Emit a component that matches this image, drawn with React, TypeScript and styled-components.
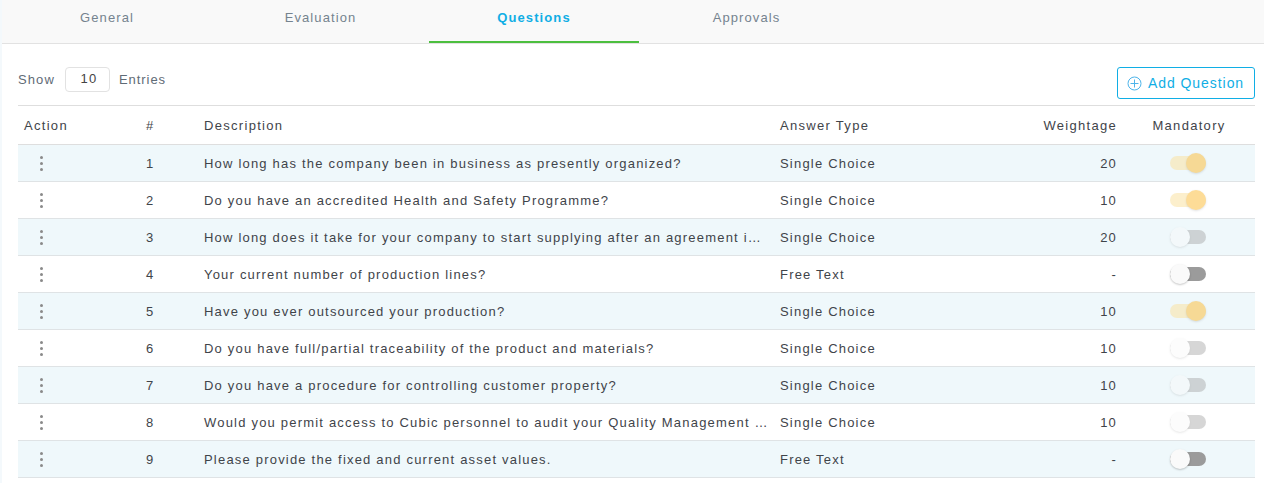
import React from "react";
import styled, { createGlobalStyle } from "styled-components";

const Global = createGlobalStyle`
  html, body { margin: 0; padding: 0; background: #f4f9fc; }
  body { font-family: "Liberation Sans", Arial, sans-serif; overflow: hidden; }
  #root { height: 483px; overflow: hidden; }
`;

const Card = styled.div`
  margin-left: 2px;
  background: #fff;
  height: 483px;
`;

const Tabs = styled.nav`
  display: grid;
  grid-template-columns: 210px 217px 210px 215px;
  height: 43px;
  background: #f9f9f9;
  border-bottom: 1px solid #e2e2e2;
  box-sizing: content-box;
`;

const Tab = styled.div<{ $active?: boolean }>`
  display: flex;
  align-items: center;
  justify-content: center;
  height: 43px;
  box-sizing: border-box;
  padding-bottom: 6px;
  font-size: 13px;
  letter-spacing: 1.1px;
  font-weight: ${(p) => (p.$active ? 700 : 400)};
  color: ${(p) => (p.$active ? "#10aee5" : "#75838f")};
  border-bottom: 2px solid ${(p) => (p.$active ? "#4cbf3f" : "transparent")};
`;

const Content = styled.div`
  padding: 0 9px 0 16px;
`;

const Toolbar = styled.div`
  display: flex;
  justify-content: space-between;
  align-items: flex-start;
  height: 61px;
  padding-top: 23px;
  box-sizing: border-box;
`;

const ShowGroup = styled.div`
  display: flex;
  align-items: center;
  gap: 10px;
  height: 25px;
  font-size: 13px;
  letter-spacing: 1.1px;
  color: #5f6b76;
`;

const EntriesLabel = styled.span`
  margin-left: -1px;
  letter-spacing: 0.95px;
`;

const PageSize = styled.div`
  width: 45px;
  height: 25px;
  box-sizing: border-box;
  display: flex;
  align-items: center;
  justify-content: center;
  padding: 0 0 3px 3px;
  border: 1px solid #e2e2e2;
  border-radius: 4px;
  font-size: 13px;
  letter-spacing: 1.1px;
  color: #444;
`;

const AddButton = styled.button`
  display: flex;
  align-items: center;
  justify-content: center;
  gap: 6px;
  width: 138px;
  height: 32px;
  background: #fff;
  border: 1px solid #10aee5;
  border-radius: 3px;
  padding: 0 1px 0 0;
  font-family: inherit;
  font-size: 14px;
  letter-spacing: 0.95px;
  color: #10aee5;
`;

const Table = styled.table`
  width: 1237px;
  border-collapse: collapse;
  table-layout: fixed;
`;

const HeadRow = styled.tr`
  height: 39px;
  border-top: 1px solid #dedede;
  border-bottom: 1px solid #dedede;
`;

const Th = styled.th<{ $align?: string }>`
  padding: 0 6px;
  font-weight: 400;
  font-size: 13px;
  letter-spacing: 1.3px;
  color: #3f444a;
  text-align: ${(p) => p.$align || "left"};
`;

const Row = styled.tr<{ $odd: boolean }>`
  height: 37px;
  background: ${(p) => (p.$odd ? "#eff8fb" : "#fff")};
  border-bottom: 1px solid #dfe3e5;
`;

const Td = styled.td<{ $align?: string }>`
  padding: 0 6px;
  font-size: 13px;
  letter-spacing: 1.2px;
  color: #3f444a;
  text-align: ${(p) => p.$align || "left"};
  white-space: nowrap;
  overflow: hidden;
  text-overflow: ellipsis;
`;

const Dots = styled.div`
  display: flex;
  flex-direction: column;
  align-items: center;
  gap: 3px;
  width: 6px;
  margin-left: 14px;
  & > i {
    display: block;
    width: 3px;
    height: 3px;
    border-radius: 50%;
    background: #8a8a8a;
  }
`;

type SwitchState = "on" | "off" | "dark";

const trackColor: Record<SwitchState, string> = {
  on: "#fbe19b",
  off: "#9b9b9b",
  dark: "#9b9b9b",
};

const stateOpacity: Record<SwitchState, number> = { on: 0.5, off: 0.4, dark: 1 };

const Switch = styled.div<{ $state: SwitchState }>`
  position: relative;
  width: 36px;
  height: 14px;
  margin: 0 auto;
  left: -1px;
  border-radius: 7px;
  background: ${(p) => trackColor[p.$state]};
  opacity: ${(p) => stateOpacity[p.$state]};
`;

const Thumb = styled.span<{ $state: SwitchState }>`
  position: absolute;
  top: -3px;
  left: ${(p) => (p.$state === "on" ? "16px" : "0")};
  width: 20px;
  height: 20px;
  border-radius: 50%;
  background: ${(p) => (p.$state === "on" ? "#fdbb31" : "#fafafa")};
  box-shadow: 0 1px 2px rgba(0, 0, 0, 0.22);
`;

type Q = { d: string; t: string; w: string; s: SwitchState };

const questions: Q[] = [
  { d: "How long has the company been in business as presently organized?", t: "Single Choice", w: "20", s: "on" },
  { d: "Do you have an accredited Health and Safety Programme?", t: "Single Choice", w: "10", s: "on" },
  { d: "How long does it take for your company to start supplying after an agreement is signed?", t: "Single Choice", w: "20", s: "off" },
  { d: "Your current number of production lines?", t: "Free Text", w: "-", s: "dark" },
  { d: "Have you ever outsourced your production?", t: "Single Choice", w: "10", s: "on" },
  { d: "Do you have full/partial traceability of the product and materials?", t: "Single Choice", w: "10", s: "off" },
  { d: "Do you have a procedure for controlling customer property?", t: "Single Choice", w: "10", s: "off" },
  { d: "Would you permit access to Cubic personnel to audit your Quality Management System?", t: "Single Choice", w: "10", s: "off" },
  { d: "Please provide the fixed and current asset values.", t: "Free Text", w: "-", s: "dark" },
];

const colWidths = [122, 58, 576, 200, 149, 132];

export default function App() {
  return (
    <>
      <Global />
      <Card>
        <Tabs>
          <Tab>General</Tab>
          <Tab>Evaluation</Tab>
          <Tab $active>Questions</Tab>
          <Tab>Approvals</Tab>
        </Tabs>
        <Content>
          <Toolbar>
            <ShowGroup>
              <span>Show</span>
              <PageSize>10</PageSize>
              <EntriesLabel>Entries</EntriesLabel>
            </ShowGroup>
            <AddButton>
              <svg width="15" height="15" viewBox="0 0 15 15" fill="none" stroke="#4db4ea" strokeWidth="1">
                <circle cx="7.5" cy="7.5" r="6.5" />
                <path d="M7.5 3.5v8M3.5 7.5h8" />
              </svg>
              Add Question
            </AddButton>
          </Toolbar>
          <Table>
            <colgroup>
              {colWidths.map((w, i) => (
                <col key={i} width={w} />
              ))}
            </colgroup>
            <thead>
              <HeadRow>
                <Th>Action</Th>
                <Th>#</Th>
                <Th>Description</Th>
                <Th>Answer Type</Th>
                <Th $align="right">Weightage</Th>
                <Th $align="center">Mandatory</Th>
              </HeadRow>
            </thead>
            <tbody>
              {questions.map((q, i) => (
                <Row key={i} $odd={i % 2 === 0}>
                  <Td>
                    <Dots>
                      <i />
                      <i />
                      <i />
                    </Dots>
                  </Td>
                  <Td>{i + 1}</Td>
                  <Td>{q.d}</Td>
                  <Td>{q.t}</Td>
                  <Td $align="right">{q.w}</Td>
                  <Td>
                    <Switch $state={q.s}>
                      <Thumb $state={q.s} />
                    </Switch>
                  </Td>
                </Row>
              ))}
            </tbody>
          </Table>
        </Content>
      </Card>
    </>
  );
}
